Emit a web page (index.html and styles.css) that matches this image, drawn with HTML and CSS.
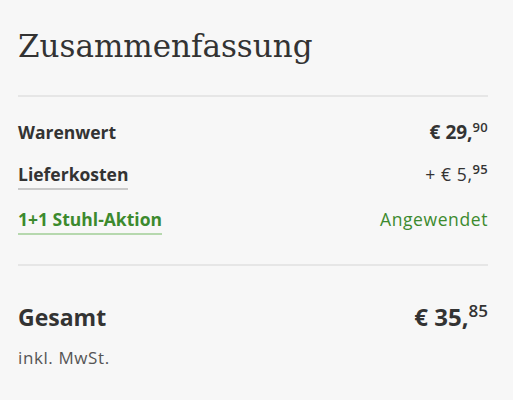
FILE: index.html
```html
<!DOCTYPE html>
<html lang="de">
<head>
<meta charset="utf-8">
<link rel="stylesheet" href="styles.css">
</head>
<body>
<section class="summary">
  <h1 class="title">Zusammenfassung</h1>
  <div class="rule"></div>
  <div class="rows">
    <div class="row">
      <span class="label strong">Warenwert</span>
      <span class="price strong big">€ 29,<sup>90</sup></span>
    </div>
    <div class="row">
      <span class="label strong link">Lieferkosten</span>
      <span class="price regular">+ € 5,<sup>95</sup></span>
    </div>
    <div class="row green">
      <span class="label strong link link-green">1+1 Stuhl-Aktion</span>
      <span class="price regular">Angewendet</span>
    </div>
  </div>
  <div class="rule"></div>
  <div class="total">
    <div class="row">
      <span class="total-label">Gesamt</span>
      <span class="total-price">€ 35,<sup>85</sup></span>
    </div>
    <div class="vat regular">inkl. MwSt.</div>
  </div>
</section>
</body>
</html>
```
FILE: styles.css
```css
html, body { margin: 0; padding: 0; background: #f7f7f7; }
body { font-family: "Open Sans", "Noto Sans", sans-serif; color: #333; }
.summary { padding: 25px 25px 0 18px; }
.title {
  margin: 0;
  font-family: "DejaVu Serif", serif;
  font-weight: 400;
  font-size: 31px;
  line-height: 42px;
  color: #333;
}
.rule { height: 2px; background: #e6e6e6; }
.summary > .rule:first-of-type { margin-top: 28px; }
.rows { display: flex; flex-direction: column; gap: 18px; padding: 24px 0 29px; }
.row { display: flex; justify-content: space-between; align-items: baseline; font-size: 17.5px; line-height: 22px; }
.strong { font-weight: 700; }
.regular { letter-spacing: 0.6px; }
.big { font-size: 19px; }
.price sup { font-size: 13px; font-weight: 600; letter-spacing: 0.3px; vertical-align: 0; position: relative; top: -7px; }
.link { border-bottom: 2px solid #c9c9c9; padding-bottom: 3px; }
.green { color: #3c8a2e; }
.link-green { border-bottom-color: #b6d8ae; }
.total { padding-top: 37px; }
.total-label { font-size: 23px; font-weight: 700; line-height: 28px; }
.total-price { font-size: 24px; font-weight: 700; line-height: 28px; }
.total-price sup { font-size: 17px; font-weight: 600; vertical-align: 0; position: relative; top: -9px; }
.vat { margin-top: 12px; font-size: 17px; color: #555; }
```
